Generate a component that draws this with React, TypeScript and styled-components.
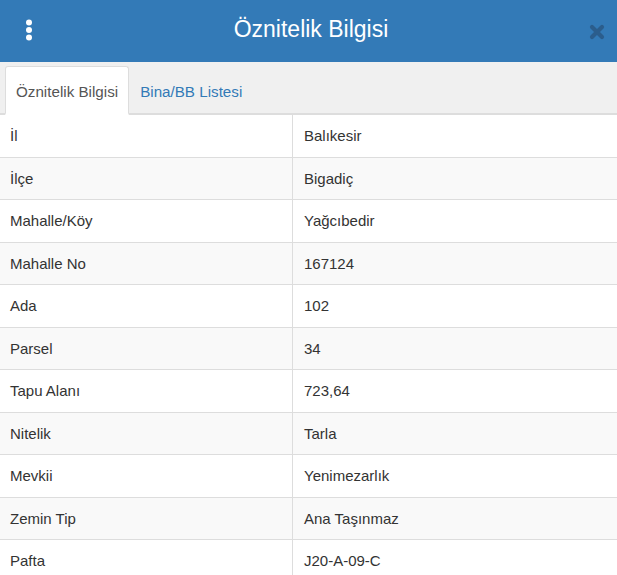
import React from 'react'
import styled, { createGlobalStyle } from 'styled-components'

const GlobalStyle = createGlobalStyle`
  html, body {
    margin: 0;
    padding: 0;
    background: #fff;
  }
  body {
    font-family: "Liberation Sans", Arial, sans-serif;
    color: #333;
  }
`

const rows: [string, string][] = [
  ['İl', 'Balıkesir'],
  ['İlçe', 'Bigadiç'],
  ['Mahalle/Köy', 'Yağcıbedir'],
  ['Mahalle No', '167124'],
  ['Ada', '102'],
  ['Parsel', '34'],
  ['Tapu Alanı', '723,64'],
  ['Nitelik', 'Tarla'],
  ['Mevkii', 'Yenimezarlık'],
  ['Zemin Tip', 'Ana Taşınmaz'],
  ['Pafta', 'J20-A-09-C'],
]

const App: React.FC = () => {
  return (
    <Panel>
      <GlobalStyle />
      <Header>
        <MenuButton aria-label="menu">
          <svg width="8" height="22" viewBox="0 0 8 22">
            <circle cx="4" cy="3.5" r="3" fill="#fff" />
            <circle cx="4" cy="11" r="3" fill="#fff" />
            <circle cx="4" cy="18.5" r="3" fill="#fff" />
          </svg>
        </MenuButton>
        <Title>Öznitelik Bilgisi</Title>
        <CloseButton aria-label="close">
          <svg width="16" height="16" viewBox="0 0 16 16">
            <path d="M3 3 L13 13 M13 3 L3 13" stroke="#2b5d8c" strokeWidth="4.2" strokeLinecap="round" />
          </svg>
        </CloseButton>
      </Header>

      <TabBar>
        <Tab active>Öznitelik Bilgisi</Tab>
        <Tab>Bina/BB Listesi</Tab>
      </TabBar>

      <Table>
        {rows.map(([label, value], i) => (
          <Row key={label} striped={i % 2 === 1}>
            <Cell>{label}</Cell>
            <Cell divided>{value}</Cell>
          </Row>
        ))}
      </Table>
    </Panel>
  )
}

export default App

const Panel = styled.div`
  width: 617px;
  height: 575px;
  overflow: hidden;
  background: #fff;
`

const Header = styled.div`
  height: 62px;
  background: #337ab7;
  display: flex;
  align-items: center;
  justify-content: space-between;
  padding: 0 12px 0 25px;
  box-sizing: border-box;
`

const MenuButton = styled.span`
  display: flex;
  align-items: center;
  width: 8px;
  margin-top: -2px;
`

const Title = styled.h1`
  margin: 0;
  font-size: 23px;
  font-weight: normal;
  color: #fff;
  flex: 1;
  text-align: center;
  margin-top: -3px;
`

const CloseButton = styled.span`
  display: flex;
  align-items: center;
  margin-top: 2px;
`

const TabBar = styled.div`
  height: 53px;
  background: #f0f0f0;
  border-bottom: 2px solid #ddd;
  box-sizing: border-box;
  display: flex;
  align-items: flex-end;
  padding-left: 5px;
`

const Tab = styled.div<{ active?: boolean }>`
  height: 49px;
  margin-bottom: -2px;
  box-sizing: border-box;
  padding: 2px 10px 0;
  display: flex;
  align-items: center;
  font-size: 15.2px;
  color: ${p => (p.active ? '#555' : '#337ab7')};
  background: ${p => (p.active ? '#fff' : 'transparent')};
  border: 1px solid ${p => (p.active ? '#ddd' : 'transparent')};
  border-bottom: 2px solid ${p => (p.active ? '#fff' : 'transparent')};
  border-radius: 3px 3px 0 0;
`

const Table = styled.div`
  display: flex;
  flex-direction: column;
`

const Row = styled.div<{ striped?: boolean }>`
  display: grid;
  grid-template-columns: 292px 1fr;
  height: 42.5px;
  box-sizing: border-box;
  border-bottom: 1px solid #ddd;
  background: ${p => (p.striped ? '#f9f9f9' : '#fff')};
`

const Cell = styled.div<{ divided?: boolean }>`
  display: flex;
  align-items: center;
  padding-left: ${p => (p.divided ? '11px' : '10px')};
  font-size: 15px;
  color: #333;
  border-left: ${p => (p.divided ? '1px solid #ddd' : 'none')};
`
